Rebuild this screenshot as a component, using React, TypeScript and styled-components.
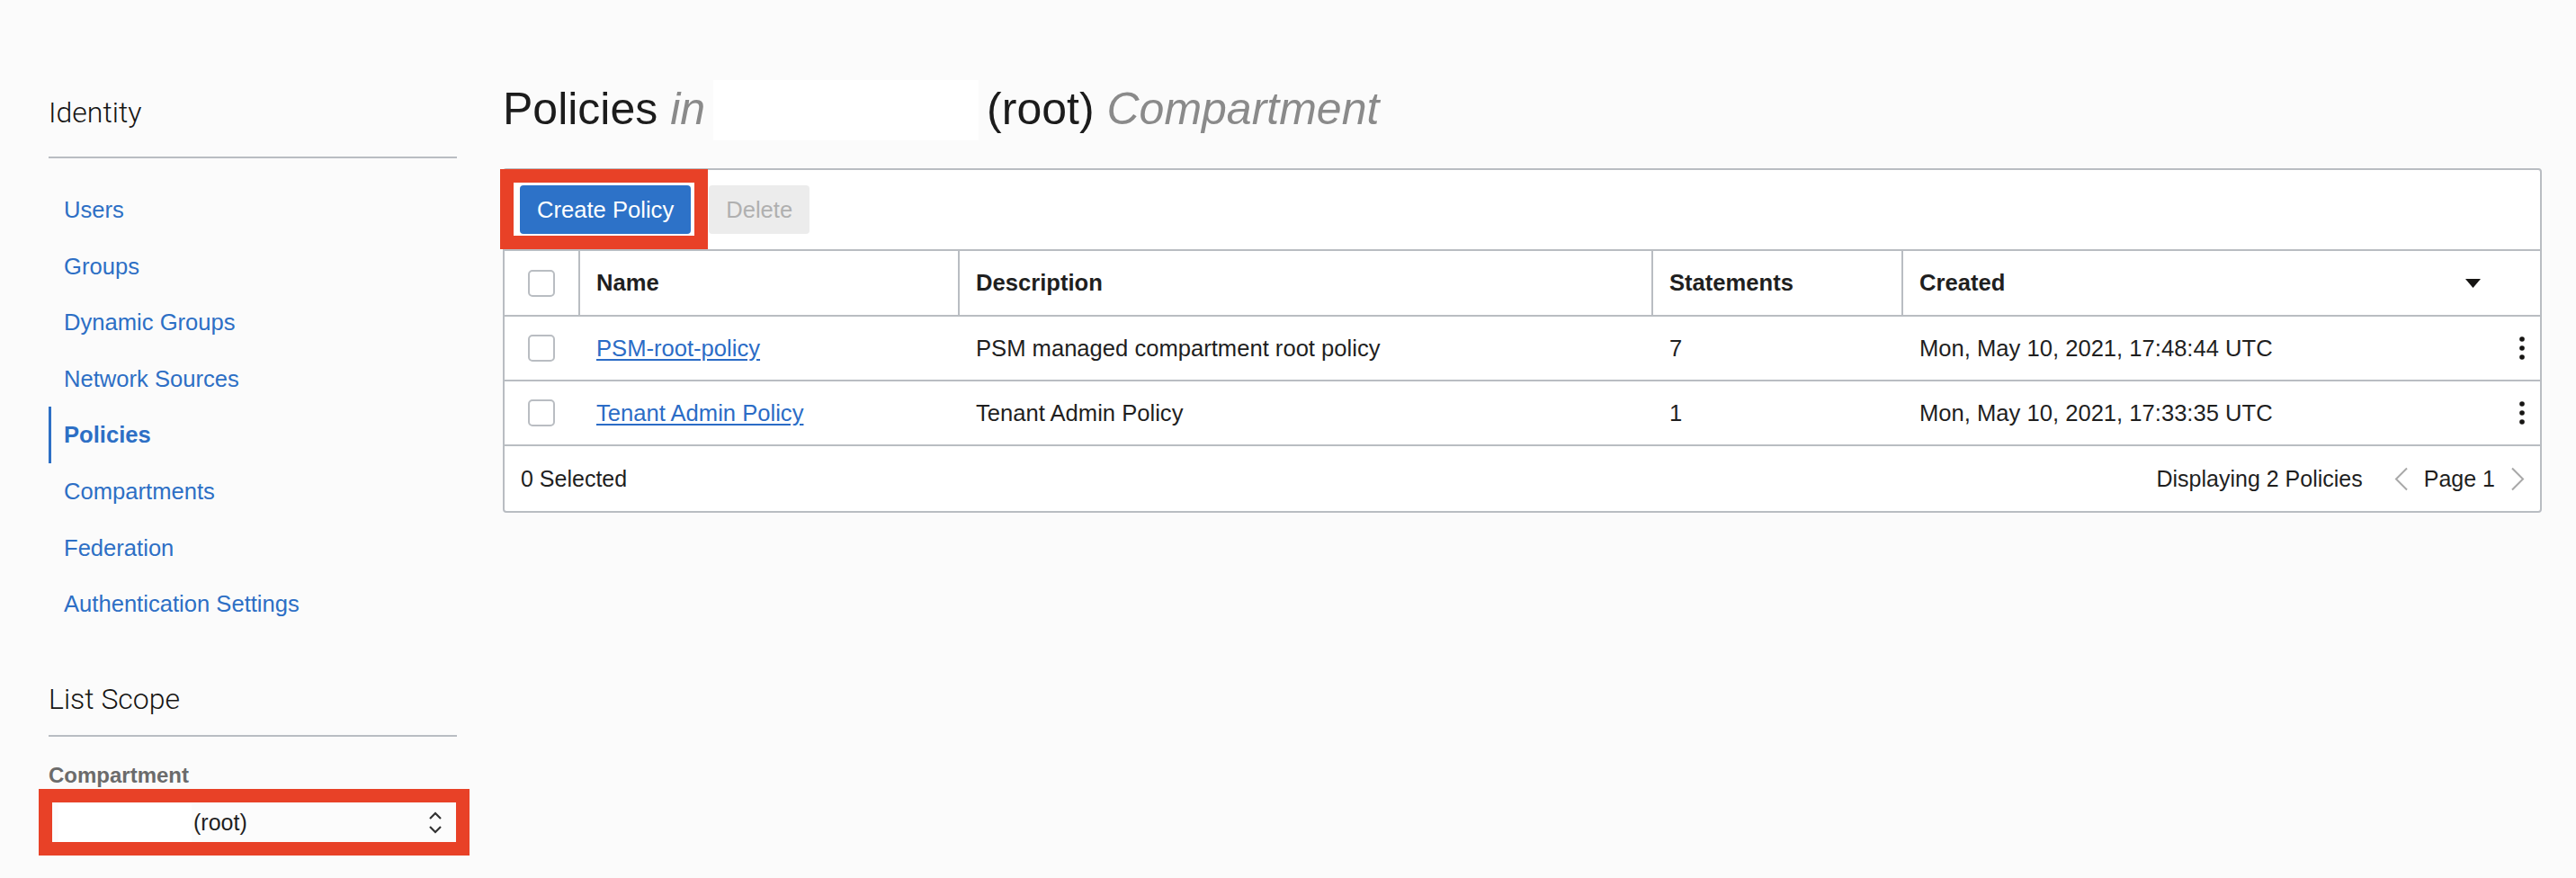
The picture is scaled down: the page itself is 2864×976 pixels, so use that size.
import styled, { createGlobalStyle } from "styled-components";

const GlobalStyle = createGlobalStyle`
  html, body {
    margin: 0;
    padding: 0;
  }
  body {
    background: #fbfbfb;
    font-family: "Liberation Sans", Arial, Helvetica, sans-serif;
    color: #1f1f1f;
  }
`;

const navItems = [
  "Users",
  "Groups",
  "Dynamic Groups",
  "Network Sources",
  "Policies",
  "Compartments",
  "Federation",
  "Authentication Settings",
];

const policies = [
  {
    name: "PSM-root-policy",
    description: "PSM managed compartment root policy",
    statements: 7,
    created: "Mon, May 10, 2021, 17:48:44 UTC",
  },
  {
    name: "Tenant Admin Policy",
    description: "Tenant Admin Policy",
    statements: 1,
    created: "Mon, May 10, 2021, 17:33:35 UTC",
  },
];

function Kebab() {
  return (
    <svg width="6" height="26" viewBox="0 0 6 26">
      <circle cx="3" cy="3" r="2.8" fill="#161513" />
      <circle cx="3" cy="13" r="2.8" fill="#161513" />
      <circle cx="3" cy="23" r="2.8" fill="#161513" />
    </svg>
  );
}

function Chevron({ dir }: { dir: "left" | "right" }) {
  return (
    <svg width="17" height="27" viewBox="0 0 17 27">
      <polyline
        points={dir === "left" ? "15,1.5 3,13.5 15,25.5" : "2,1.5 14,13.5 2,25.5"}
        fill="none"
        stroke="#a8a8a8"
        strokeWidth="2"
      />
    </svg>
  );
}

export default function App() {
  return (
    <>
      <GlobalStyle />
      <Page>
        <Sidebar>
          <SideHeading>Identity</SideHeading>
          <NavList>
            {navItems.map((item) => (
              <NavItem key={item} $active={item === "Policies"}>
                {item}
              </NavItem>
            ))}
          </NavList>
          <SideHeading $gap>List Scope</SideHeading>
          <FieldLabel>Compartment</FieldLabel>
          <Highlight $inset="-16px -16px -15px -15px" $margin="17px 0 0 4px">
            <SelectBox>
              <Redacted $width={148} />
              <SelectText>(root)</SelectText>
              <svg width="16" height="25" viewBox="0 0 16 25">
                <polyline points="2,8 8,2 14,8" fill="none" stroke="#333" strokeWidth="2.2" />
                <polyline points="2,17 8,23 14,17" fill="none" stroke="#333" strokeWidth="2.2" />
              </svg>
            </SelectBox>
          </Highlight>
        </Sidebar>

        <Main>
          <Title>
            Policies <Muted>in</Muted>
            <TitleRedacted />
            (root) <Muted>Compartment</Muted>
          </Title>

          <Panel>
            <Toolbar>
              <Highlight $inset="-18px -19px -17px -22px">
                <Button $primary>Create Policy</Button>
              </Highlight>
              <Button>Delete</Button>
            </Toolbar>

            <HeaderRow>
              <HeadCell>
                <Checkbox />
              </HeadCell>
              <HeadCell $divider>Name</HeadCell>
              <HeadCell $divider>Description</HeadCell>
              <HeadCell $divider>Statements</HeadCell>
              <HeadCell $divider $spread>
                Created
                <svg width="17" height="10" viewBox="0 0 17 10">
                  <polygon points="0,0 17,0 8.5,10" fill="#161513" />
                </svg>
              </HeadCell>
            </HeaderRow>

            {policies.map((p) => (
              <Row key={p.name}>
                <Cell $center>
                  <Checkbox />
                </Cell>
                <Cell>
                  <NameLink href="#">{p.name}</NameLink>
                </Cell>
                <Cell>{p.description}</Cell>
                <Cell>{p.statements}</Cell>
                <Cell $spread>
                  {p.created}
                  <Kebab />
                </Cell>
              </Row>
            ))}

            <Footer>
              <span>0 Selected</span>
              <Pager>
                <span>Displaying 2 Policies</span>
                <PageNav>
                  <Chevron dir="left" />
                  <span>Page 1</span>
                  <Chevron dir="right" />
                </PageNav>
              </Pager>
            </Footer>
          </Panel>
        </Main>
      </Page>
    </>
  );
}

const Page = styled.div`
  display: flex;
  align-items: flex-start;
  gap: 51px;
  padding: 0 38px 0 54px;
  min-height: 976px;
  box-sizing: border-box;
`;

const Sidebar = styled.aside`
  width: 454px;
  flex-shrink: 0;
  padding-top: 106px;
  display: flex;
  flex-direction: column;
  align-items: flex-start;
`;

const SideHeading = styled.div<{ $gap?: boolean }>`
  align-self: stretch;
  font-family: Roboto, "Liberation Sans", sans-serif;
  font-weight: 300;
  font-size: 32px;
  line-height: 38px;
  color: #161513;
  margin-top: ${(p) => (p.$gap ? "55px" : "0")};
  padding-bottom: ${(p) => (p.$gap ? "21px" : "30px")};
  border-bottom: 2px solid #b9bdc2;
`;

const NavList = styled.ul`
  align-self: stretch;
  list-style: none;
  margin: 26px 0 0;
  padding: 0;
`;

const NavItem = styled.li<{ $active?: boolean }>`
  height: 62.6px;
  line-height: 62.6px;
  font-size: 25.6px;
  color: #2d6fc5;
  font-weight: ${(p) => (p.$active ? 700 : 400)};
  border-left: 3px solid ${(p) => (p.$active ? "#2d6fc5" : "transparent")};
  padding-left: 14px;
  white-space: nowrap;
`;

const FieldLabel = styled.div`
  margin-top: 29px;
  font-size: 24px;
  line-height: 28px;
  font-weight: 700;
  color: #6b6b6b;
`;

const Highlight = styled.div<{ $inset: string; $margin?: string }>`
  position: relative;
  display: inline-flex;
  margin: ${(p) => p.$margin ?? "0"};
  &::after {
    content: "";
    position: absolute;
    inset: ${(p) => p.$inset};
    border: 15px solid #e84127;
    pointer-events: none;
    z-index: 2;
  }
`;

const SelectBox = styled.div`
  width: 448px;
  height: 43px;
  box-sizing: border-box;
  background: #fcfcfc;
  display: flex;
  align-items: center;
  padding: 0 14px 0 7px;
`;

const Redacted = styled.span<{ $width: number }>`
  display: block;
  width: ${(p) => p.$width}px;
  height: 100%;
  background: #ffffff;
`;

const SelectText = styled.span`
  flex: 1;
  margin-left: 2px;
  font-size: 25px;
  color: #1f1f1f;
`;

const Main = styled.main`
  flex: 1;
  padding-top: 85px;
`;

const Title = styled.h1`
  margin: 0 0 30px;
  font-size: 50px;
  line-height: 72px;
  font-weight: 400;
  color: #1c1c1c;
  white-space: nowrap;
`;

const Muted = styled.span`
  font-style: italic;
  color: #8a8a8a;
`;

const TitleRedacted = styled.span`
  display: inline-block;
  width: 295px;
  height: 67px;
  margin: 0 9px;
  background: #ffffff;
  vertical-align: -18px;
`;

const Panel = styled.section`
  background: #ffffff;
  border: 2px solid #b9bdc2;
  border-radius: 4px;
`;

const Toolbar = styled.div`
  display: flex;
  align-items: center;
  gap: 20px;
  height: 88px;
  padding: 0 17px;
  border-bottom: 2px solid #b9bdc2;
`;

const Button = styled.button<{ $primary?: boolean }>`
  height: 54px;
  padding: 0 19px;
  border: none;
  border-radius: 4px;
  font-family: "Liberation Sans", Arial, sans-serif;
  font-size: 25.6px;
  background: ${(p) => (p.$primary ? "#2d72c8" : "#ececec")};
  color: ${(p) => (p.$primary ? "#ffffff" : "#b0b0b0")};
`;

const columns = "82px 422px 771px 278px 1fr";

const HeaderRow = styled.div`
  display: grid;
  grid-template-columns: ${columns};
  height: 71px;
  border-bottom: 2px solid #b9bdc2;
`;

const HeadCell = styled.div<{ $divider?: boolean; $spread?: boolean }>`
  display: flex;
  align-items: center;
  justify-content: ${(p) => (p.$spread ? "space-between" : p.$divider ? "flex-start" : "center")};
  border-left: ${(p) => (p.$divider ? "2px solid #b9bdc2" : "none")};
  padding: ${(p) => (p.$divider ? "0 66px 0 18px" : "0")};
  font-size: 25.6px;
  font-weight: 700;
  color: #1f1f1f;
  white-space: nowrap;
`;

const Row = styled.div`
  display: grid;
  grid-template-columns: ${columns};
  height: 70px;
  border-bottom: 2px solid #b9bdc2;
`;

const Cell = styled.div<{ $center?: boolean; $spread?: boolean }>`
  display: flex;
  align-items: center;
  justify-content: ${(p) => (p.$center ? "center" : p.$spread ? "space-between" : "flex-start")};
  padding: ${(p) => (p.$center ? "0" : p.$spread ? "0 17px 0 20px" : "0 0 0 20px")};
  font-size: 25.6px;
  color: #1f1f1f;
  white-space: nowrap;
`;

const Checkbox = styled.span`
  display: block;
  width: 30px;
  height: 30px;
  box-sizing: border-box;
  border: 2px solid #b9bdc2;
  border-radius: 5px;
  background: #ffffff;
`;

const NameLink = styled.a`
  color: #2b6cc6;
  text-decoration: underline;
  text-underline-offset: 3px;
`;

const Footer = styled.div`
  display: flex;
  align-items: center;
  justify-content: space-between;
  height: 72px;
  padding: 0 16px 0 18px;
  font-size: 25px;
  color: #1f1f1f;
`;

const Pager = styled.div`
  display: flex;
  align-items: center;
  gap: 34px;
`;

const PageNav = styled.div`
  display: flex;
  align-items: center;
  gap: 17px;
`;
